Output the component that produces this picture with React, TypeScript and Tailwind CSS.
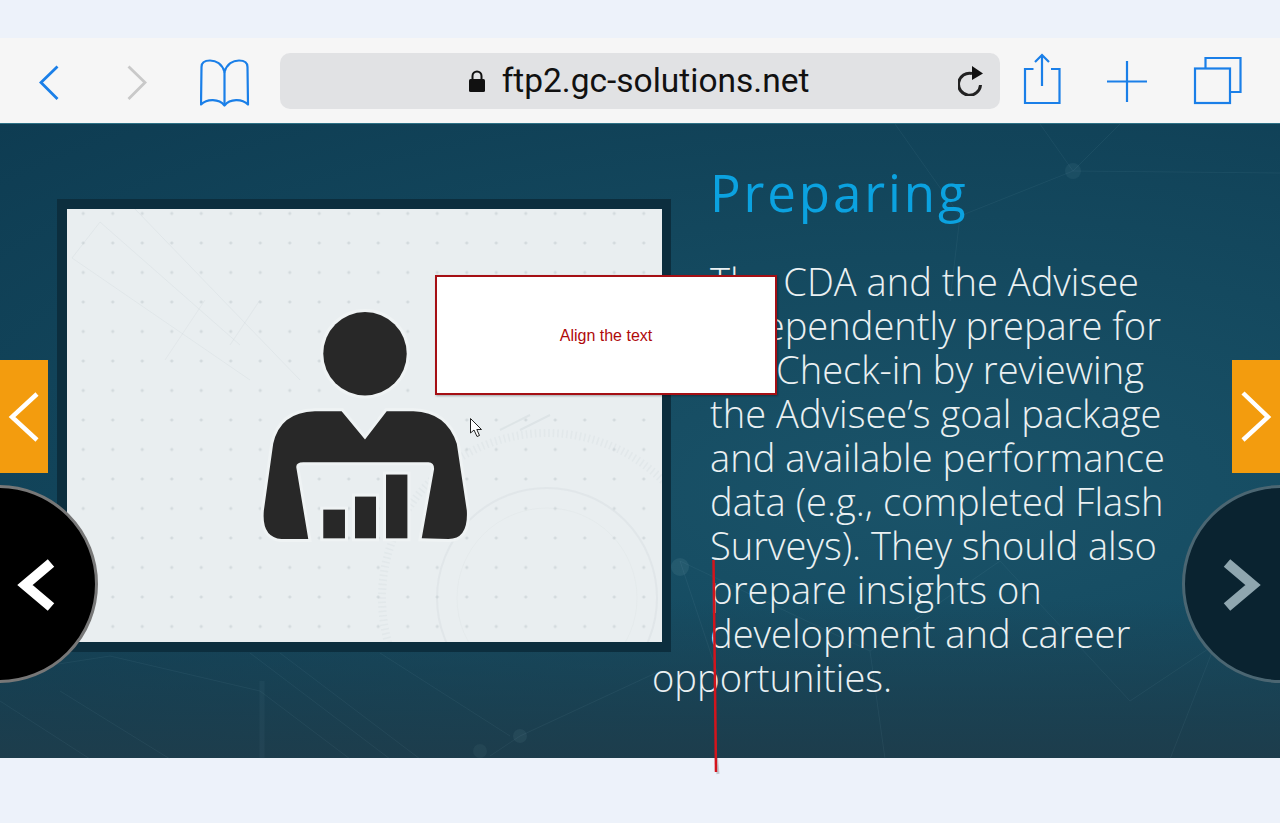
import React from 'react';

const BLUE = '#1a7fe8';

// toolbar icons share one height, the viewBox y range follows the address bar (53-109)
const BackIcon = () => (
  <svg width="20" height="56" viewBox="39 53 20 56" fill="none" stroke={BLUE} strokeWidth="2.800">
    <path d="M57.500 66.500 L41 82.500 L57.500 99" />
  </svg>
);

const ForwardIcon = () => (
  <svg width="20" height="56" viewBox="127 53 20 56" fill="none" stroke="#c9c9c9" strokeWidth="2.800">
    <path d="M128.500 66.500 L145 82.500 L128.500 99" />
  </svg>
);

const BookIcon = () => (
  <svg width="50" height="56" viewBox="200 53 50 56" fill="none" stroke={BLUE} strokeWidth="2.200" strokeLinejoin="round">
    <path d="M224.500 72 C222 64 216 60.500 210 60.500 C205 60.500 201.500 62 201.500 67 L201 104.500 C207 98.500 219 98.500 224.500 105.500 C230 98.500 242 98.500 248 104.500 L247.500 67 C247.500 62 244 60.500 239 60.500 C233 60.500 227 64 224.500 72 Z" />
    <path d="M224.500 72 L224.500 105" />
  </svg>
);

const LockIcon = () => (
  <svg width="18" height="24" viewBox="0 0 18 24" className="shrink-0">
    <path d="M4.500 11 V7 A4.500 4.500 0 0 1 13.500 7 V11" fill="none" stroke="#111" strokeWidth="2" />
    <rect x="1" y="10" width="16" height="13" rx="1.500" fill="#111" />
  </svg>
);

const ReloadIcon = () => (
  <svg width="28" height="32" viewBox="0 0 28 32" fill="none">
    <path d="M22.500 21 A11 11 0 1 1 14 9.500" stroke="#222" strokeWidth="3" />
    <path d="M14 2 L25 9.500 L14 16 Z" fill="#111" />
  </svg>
);

const ShareIcon = () => (
  <svg width="38" height="56" viewBox="1023 53 38 56" fill="none" stroke={BLUE} strokeWidth="2.200">
    <path d="M1033.500 69 H1025 V103 H1059.500 V69 H1051" />
    <path d="M1042 86 V55 M1035 62 L1042 55 L1049 62" />
  </svg>
);

const PlusIcon = () => (
  <svg width="42" height="56" viewBox="1107 53 42 56" fill="none" stroke={BLUE} strokeWidth="2.200">
    <path d="M1128 61 V102 M1108 81.500 H1148" />
  </svg>
);

const TabsIcon = () => (
  <svg width="49" height="56" viewBox="1194 53 49 56" fill="none" stroke={BLUE} strokeWidth="2.200">
    <rect x="1196" y="68.500" width="35" height="34.500" />
    <path d="M1206.500 68 V58 H1241.500 V92 H1231.500" />
  </svg>
);

const PersonIcon = () => (
  <svg width="204" height="228" viewBox="70 65 610 683" className="relative overflow-visible blur-[0.4px]">
    <g fill="#282828" stroke="#eff3f4" strokeWidth="18" paintOrder="stroke">
      <circle cx="375" cy="190" r="125" />
      <path d="M305 362 L375 447 L440 362 L520 362 Q620 365 650 460 L680 660 Q685 745 625 745 L545 743 L582 535 Q582 515 565 515 L190 515 Q165 515 170 535 L205 745 L125 745 Q65 740 72 660 L100 460 Q120 365 225 362 Z" />
      <rect x="250" y="657" width="65" height="86" />
      <rect x="345" y="618" width="63" height="125" />
      <rect x="438" y="552" width="64" height="191" />
    </g>
  </svg>
);

// faint network pattern behind the slide
const SlideLines = () => (
  <svg className="absolute inset-0" width="1280" height="635" viewBox="0 123 1280 635" fill="none" stroke="#9fc4d2" strokeOpacity="0.07">
    <path d="M680 560 L870 650 L1000 560 L1130 700 L1280 600 M870 650 L885 758 M1073 170 L960 215 M1073 170 L1280 172 M1073 170 L1040 123 M1073 170 L1120 123 M895 123 L960 215 L950 300 M680 560 L720 680 M1170 758 L1240 580" />
    <path d="M0 672 L110 655 L260 690 L350 758 M280 652 L420 758 M250 652 L390 758 M60 690 L170 758 M0 700 L90 758 M660 670 L520 735 L490 755 M380 652 L510 735" />
    <path d="M262 680 V758" strokeWidth="5" strokeOpacity="0.05" />
    <circle cx="680" cy="566" r="9" fill="#9fc4d2" fillOpacity="0.1" stroke="none" />
    <circle cx="1073" cy="170" r="8" fill="#9fc4d2" fillOpacity="0.07" stroke="none" />
    <circle cx="520" cy="735" r="7" fill="#9fc4d2" fillOpacity="0.08" stroke="none" />
    <circle cx="480" cy="750" r="7" fill="#9fc4d2" fillOpacity="0.06" stroke="none" />
  </svg>
);

// arcs on the light picture panel
const PanelLines = () => (
  <svg className="absolute inset-0" width="595" height="433" viewBox="67 209 595 433" fill="none" stroke="#c3ccd1" strokeOpacity="0.22">
    <circle cx="547" cy="598" r="110" strokeWidth="2" />
    <circle cx="547" cy="598" r="90" strokeOpacity="0.12" />
    <circle cx="547" cy="598" r="165" strokeWidth="8" strokeDasharray="1.500 3" strokeOpacity="0.18" />
    <path d="M100 222 L72 258 M72 258 L250 380 M100 222 L240 345 M205 300 L165 360 M135 209 L300 380 M260 300 L230 345" />
    <path d="M500 430 L530 415 M520 430 L550 415" strokeOpacity="0.3" strokeWidth="2" />
  </svg>
);

const SideTab = ({ side }: { side: 'left' | 'right' }) => (
  <div className={side === 'left' ? 'absolute left-0 top-[237px] h-[113px] w-[48px] bg-[#f39c0e]' : 'absolute right-0 top-[237px] h-[113px] w-[48px] bg-[#f39c0e]'}>
    <svg width="48" height="113" viewBox="0 0 48 113" fill="none" stroke="#fff" strokeWidth="4.500">
      <path d={side === 'left' ? 'M37 34 L12 57 L37 80' : 'M11 33 L36 57 L11 80'} />
    </svg>
  </div>
);

const SideTabs = () => (
  <div className="absolute left-0 top-[123px] h-[635px] w-full">
    <SideTab side="left" />
    <SideTab side="right" />
  </div>
);

const App: React.FC = () => {
  return (
    <div className="relative flex h-[823px] w-[1280px] flex-col overflow-hidden bg-[#edf2fa]">
      <div className="h-[38px]" />

      <div className="flex h-[85px] items-start bg-[#f6f6f6] pl-[39px] pt-[15px]">
        <BackIcon />
        <div className="ml-[68px]"><ForwardIcon /></div>
        <div className="ml-[53px]"><BookIcon /></div>
        <div className="relative ml-[30px] flex h-[56px] w-[720px] items-center justify-center gap-[16px] rounded-[10px] bg-[#e1e2e4] pr-[3px]">
          <LockIcon />
          <span className="text-[33.500px] leading-none text-[#111] font-['Roboto',sans-serif]">ftp2.gc-solutions.net</span>
          <div className="absolute right-[14px] top-[11px]"><ReloadIcon /></div>
        </div>
        <div className="ml-[23px]"><ShareIcon /></div>
        <div className="ml-[45px]"><PlusIcon /></div>
        <div className="ml-[45px]"><TabsIcon /></div>
      </div>

      <div className="relative flex h-[635px] border-t border-[#2d7186] bg-[radial-gradient(ellipse_at_72%_58%,#1a5369_0%,#14495f_45%,#0e3c52_100%)] pl-[57px] pt-[75px]">
        <div className="absolute inset-0 bg-[linear-gradient(180deg,transparent_0%,transparent_75%,#1d3d4c_100%)]" />
        <SlideLines />

        <div className="relative h-[453px] w-[614px] shrink-0 border-[10px] border-r-[9px] border-[#0c2e3e] bg-[#e9eef0]">
          <div className="absolute inset-0 bg-[radial-gradient(circle,#d3dadd_1.100px,transparent_1.900px)] bg-[length:29.500px_29.500px] bg-[position:1.500px_-10.250px]" />
          <PanelLines />
          <div className="relative flex h-full items-center justify-center">
            <PersonIcon />
          </div>
        </div>

        <div className="relative ml-[39px] w-[520px] -mt-[41px] font-['Open_Sans',sans-serif]">
          <h1 className="text-[51px] font-normal leading-[68px] tracking-[2.900px] text-[#0ba2e0]">Preparing</h1>
          <p className="mt-[33px] text-[38.100px] font-light leading-[44px] text-[#eaf0f2]">
            The CDA and the Advisee<br />
            independently prepare for<br />
            the Check-in by reviewing<br />
            the Advisee’s goal package<br />
            and available performance<br />
            data (e.g., completed Flash<br />
            Surveys). They should also<br />
            prepare insights on<br />
            development and career<br />
            <span className="-ml-[58px]">opportunities.</span>
          </p>
        </div>
      </div>

      <div className="flex-1" />

      <SideTabs />

      <div className="absolute left-[-100px] top-[485px] h-[198px] w-[198px] rounded-full border-[3px] border-[#777] bg-black" />
      <svg className="absolute left-[15px] top-[555px]" width="46" height="60" viewBox="0 0 46 60" fill="none" stroke="#fff" strokeWidth="10">
        <path d="M36 8 L10 30 L36 52" />
      </svg>

      <div className="absolute left-[1182px] top-[485px] h-[198px] w-[198px] rounded-full border-[3px] border-[#4b6672] bg-[#0a2330]" />
      <svg className="absolute left-[1217px] top-[555px]" width="46" height="60" viewBox="0 0 46 60" fill="none" stroke="#8fa6af" strokeWidth="10">
        <path d="M10 8 L36 30 L10 52" />
      </svg>

      <div className="absolute left-[435px] top-[275px] flex h-[120px] w-[342px] items-center justify-center border-2 border-[#a50f14] bg-white pt-[2px] shadow-[1px_1px_2px_rgba(0,0,0,0.3)]">
        <span className="text-[16px] text-[#b00a0a] font-['Liberation_Sans',sans-serif]">Align the text</span>
      </div>

      <svg className="absolute left-[469px] top-[417px]" width="15" height="22" viewBox="0 0 15 22" fill="#fff" stroke="#222" strokeWidth="1">
        <path d="M1.500 1.500 V16 L5 13 L8 19.500 L10.500 18.500 L7.800 12.500 L12.500 12.500 Z" />
      </svg>

      <svg className="absolute left-[708px] top-[558px]" width="16" height="220" viewBox="708 558 16 220" fill="none">
        <path d="M716.500 758 L718 774" stroke="#000" strokeOpacity="0.18" strokeWidth="3" />
        <path d="M713.500 560 L716 772" stroke="#d3141c" strokeWidth="2.500" />
      </svg>
    </div>
  );
};

export default App;
